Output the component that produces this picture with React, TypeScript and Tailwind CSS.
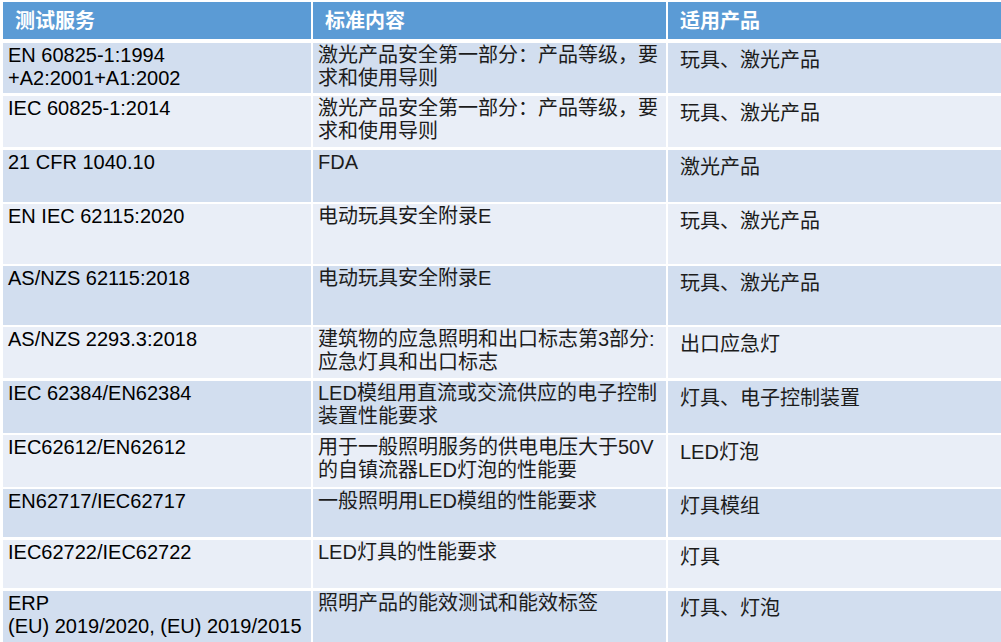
const font = { fontFamily: '"Liberation Sans", "Noto Sans CJK SC", sans-serif' }

type Row = {
  cls: string
  band: string
  service: string[]
  content: string[]
  product: string
}

const rows: Row[] = [
  {
    cls: "mt-[4px] h-[50px]",
    band: "bg-[#d2deef]",
    service: ["EN 60825-1:1994", "+A2:2001+A1:2002"],
    content: ["激光产品安全第一部分：产品等级，要", "求和使用导则"],
    product: "玩具、激光产品",
  },
  {
    cls: "mt-[3px] h-[51px]",
    band: "bg-[#e9eef7]",
    service: ["IEC 60825-1:2014"],
    content: ["激光产品安全第一部分：产品等级，要", "求和使用导则"],
    product: "玩具、激光产品",
  },
  {
    cls: "mt-[3px] h-[52px]",
    band: "bg-[#d2deef]",
    service: ["21 CFR 1040.10"],
    content: ["FDA"],
    product: "激光产品",
  },
  {
    cls: "mt-[2px] h-[60px]",
    band: "bg-[#e9eef7]",
    service: ["EN IEC 62115:2020"],
    content: ["电动玩具安全附录E"],
    product: "玩具、激光产品",
  },
  {
    cls: "mt-[2px] h-[59px]",
    band: "bg-[#d2deef]",
    service: ["AS/NZS 62115:2018"],
    content: ["电动玩具安全附录E"],
    product: "玩具、激光产品",
  },
  {
    cls: "mt-[2px] h-[51px]",
    band: "bg-[#e9eef7]",
    service: ["AS/NZS 2293.3:2018"],
    content: ["建筑物的应急照明和出口标志第3部分:", "应急灯具和出口标志"],
    product: "出口应急灯",
  },
  {
    cls: "mt-[3px] h-[52px]",
    band: "bg-[#d2deef]",
    service: ["IEC 62384/EN62384"],
    content: ["LED模组用直流或交流供应的电子控制", "装置性能要求"],
    product: "灯具、电子控制装置",
  },
  {
    cls: "mt-[2px] h-[52px]",
    band: "bg-[#e9eef7]",
    service: ["IEC62612/EN62612"],
    content: ["用于一般照明服务的供电电压大于50V", "的自镇流器LED灯泡的性能要"],
    product: "LED灯泡",
  },
  {
    cls: "mt-[2px] h-[48px]",
    band: "bg-[#d2deef]",
    service: ["EN62717/IEC62717"],
    content: ["一般照明用LED模组的性能要求"],
    product: "灯具模组",
  },
  {
    cls: "mt-[3px] h-[48px]",
    band: "bg-[#e9eef7]",
    service: ["IEC62722/IEC62722"],
    content: ["LED灯具的性能要求"],
    product: "灯具",
  },
  {
    cls: "mt-[3px] h-[60px]",
    band: "bg-[#d2deef]",
    service: ["ERP", "(EU) 2019/2020, (EU) 2019/2015"],
    content: ["照明产品的能效测试和能效标签"],
    product: "灯具、灯泡",
  },
]

function Lines({ lines }: { lines: string[] }) {
  return (
    <>
      {lines.map((l, i) => (
        <div key={i} className="whitespace-nowrap">
          {l}
        </div>
      ))}
    </>
  )
}

export default function App() {
  return (
    <div className="h-[642px] w-[1001px] overflow-hidden bg-white pl-[3px] pt-[2px]" style={font}>
      <div className="grid h-[37px] grid-cols-[308px_353px_340px] gap-x-[2px] text-[20px] font-bold text-white">
        <div className="flex items-center bg-[#5b9bd5] pl-[12px]">测试服务</div>
        <div className="flex items-center bg-[#5b9bd5] pl-[12px]">标准内容</div>
        <div className="flex items-center bg-[#5b9bd5] pl-[12px]">适用产品</div>
      </div>
      {rows.map((r, i) => (
        <div
          key={i}
          className={`grid grid-cols-[308px_353px_340px] gap-x-[2px] text-[20px] leading-[23px] text-black ${r.cls}`}
        >
          <div className={`${r.band} pl-[5px] pt-[1px]`}>
            <Lines lines={r.service} />
          </div>
          <div className={`${r.band} pl-[5px] pt-[1px] text-[#1c1c1c]`}>
            <Lines lines={r.content} />
          </div>
          <div className={`${r.band} pl-[12px] pt-[6px] text-[#1c1c1c]`}>
            <div className="whitespace-nowrap">{r.product}</div>
          </div>
        </div>
      ))}
    </div>
  )
}
